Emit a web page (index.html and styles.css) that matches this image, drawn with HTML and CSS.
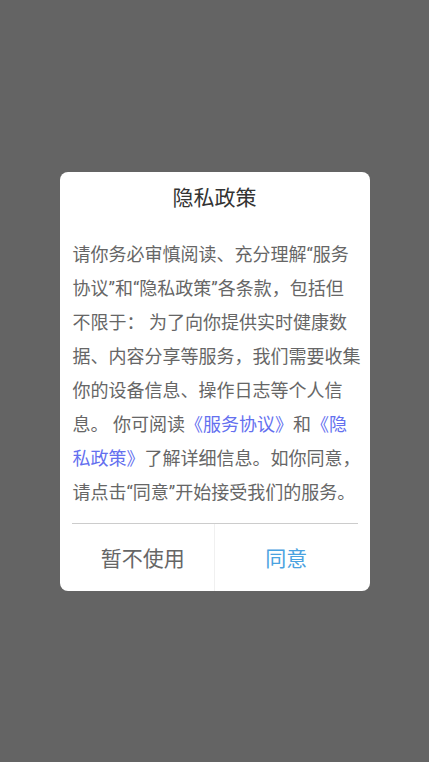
FILE: index.html
```html
<!DOCTYPE html>
<html lang="zh-CN">
<head>
    <meta charset="UTF-8">
    <meta name="viewport" content="width=device-width, initial-scale=1.0">
    <title>隐私政策</title>
    <link rel="stylesheet" href="styles.css">
</head>
<body>
    <div class="mask">
        <div class="dialog">
            <h2 class="dialog-title">隐私政策</h2>
            <p class="dialog-text">请你务必审慎阅读、充分理解“服务协议”和“隐私政策”各条款，包括但不限于： 为了向你提供实时健康数据、内容分享等服务，我们需要收集你的设备信息、操作日志等个人信息。 你可阅读<a class="link" href="#">《服务协议》</a>和<a class="link" href="#">《隐私政策》</a>了解详细信息。如你同意，请点击“同意”开始接受我们的服务。</p>
            <div class="dialog-buttons">
                <button class="btn btn-cancel">暂不使用</button>
                <button class="btn btn-ok">同意</button>
            </div>
        </div>
    </div>
</body>
</html>
```

FILE: styles.css
```css
body {
    margin: 0;
    padding: 0;
    font-family: Roboto, "Noto Sans CJK SC", sans-serif;
    background-color: #646464;
}
.mask {
    height: 100vh;
    display: flex;
    justify-content: center;
    align-items: center;
}
.dialog {
    width: 310px;
    background-color: #fff;
    border-radius: 8px;
}
.dialog-title {
    margin: 0;
    padding-top: 12px;
    font-size: 21px;
    font-weight: normal;
    line-height: 28px;
    color: #333;
    text-align: center;
}
.dialog-text {
    margin: 26px 0 13px;
    padding: 0 9px 0 13px;
    font-size: 18px;
    line-height: 34px;
    color: #666;
}
.link {
    color: #6470ef;
    text-decoration: none;
}
.dialog-buttons {
    margin: 0 12px;
    border-top: 1px solid #ccc;
    display: flex;
}
.btn {
    flex: 1;
    height: 67px;
    border: none;
    background: none;
    font-family: inherit;
    font-size: 21px;
    cursor: pointer;
}
.btn-cancel {
    color: #666;
    border-right: 1px solid #f0f0f0;
}
.btn-ok {
    color: #4aa2e0;
}
```
